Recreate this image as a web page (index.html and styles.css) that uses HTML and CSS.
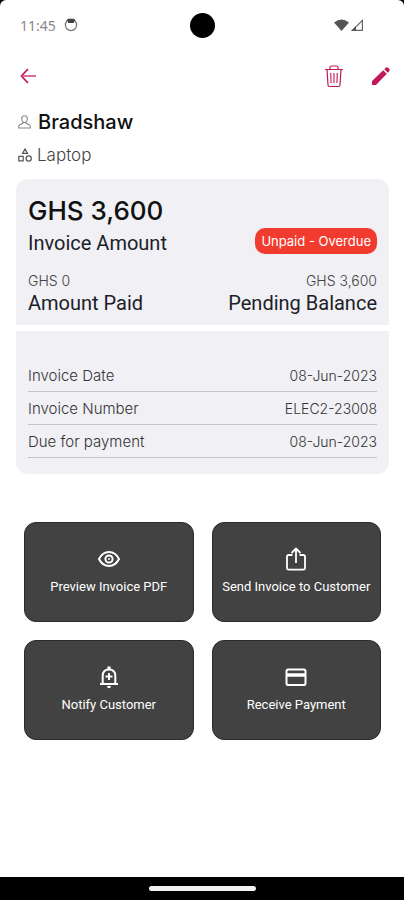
FILE: index.html
```html
<!DOCTYPE html>
<html lang="en">
<head>
<meta charset="utf-8">
<meta name="viewport" content="width=device-width, initial-scale=1">
<title>Invoice</title>
<link rel="stylesheet" href="styles.css">
</head>
<body>
<div class="screen">
  <div class="status">
    <div class="status-left">
      <span>11:45</span>
      <svg width="14" height="14" viewBox="0 0 14 14" aria-hidden="true"><circle cx="7" cy="7" r="5.600" fill="none" stroke="#777" stroke-width="1.300"/><path d="M2.500 2.500 4 .8h6l1.500 1.700-1.500 1v1.500H4V3.500z" fill="#444"/></svg>
    </div>
    <div class="camera"></div>
    <div class="status-right">
      <svg width="15" height="12" viewBox="0 0 15 12" aria-hidden="true"><path d="M0 3.500Q7.500-2.500 15 3.500L7.500 12z" fill="#555"/></svg>
      <svg width="13" height="12" viewBox="0 0 13 12" aria-hidden="true"><path d="M1.500 11.300 11.400 1.400v9.900z" fill="none" stroke="#666" stroke-width="1.200"/><path d="M0 12 5 7v5z" fill="#555"/></svg>
    </div>
  </div>

  <header class="appbar">
    <button class="icon-button" type="button" aria-label="Back">
      <svg width="16" height="16" viewBox="0 0 16 16" fill="none" stroke="#c2185b" stroke-width="1.800"><path d="M8 1 1.500 8 8 15"/><path d="M2 8h14" stroke="#d6608d"/></svg>
    </button>
    <div class="tools">
      <button class="icon-button" type="button" aria-label="Delete">
        <svg width="20" height="24" viewBox="0 0 20 24" fill="none" stroke="#c2185b" stroke-width="1.200"><path d="M1 5.500h18M6 5V3.500Q6 2 7.500 2h5Q14 2 14 3.500V5M3 5.500l1 15.500q.1 1.500 1.500 1.500h9q1.400 0 1.500-1.500L17 5.500"/><path d="M6.700 9l.4 10M10 9v10M13.300 9l-.4 10" stroke-width="1.100"/></svg>
      </button>
      <button class="icon-button" type="button" aria-label="Edit">
        <svg width="18" height="18" viewBox="0 0 18 18" fill="#c2185b"><path d="M0 18v-4L11.200 3.200l3.600 3.600L4 18zM12.300 2.200 13.700.8q1.200-1.200 2.400 0l1.100 1.100q1.200 1.200 0 2.400l-1.300 1.400z"/></svg>
      </button>
    </div>
  </header>

  <main>
    <section class="heading">
      <h1 class="customer">
        <svg width="13" height="14" viewBox="0 0 13 14" fill="none" stroke="#888" stroke-width="1.100" aria-hidden="true"><path d="M6.500.8C4.700.8 3.700 2 3.700 3.800S5 7.500 6.500 7.500s2.800-1.900 2.800-3.700S8.300.8 6.500.8zM4.800 7.300v1L1.500 10q-.9.600-.9 3h11.800q0-2.400-.9-3L8.200 8.300v-1"/></svg>
        <span>Bradshaw</span>
      </h1>
      <p class="item">
        <svg width="14" height="14" viewBox="0 0 14 14" fill="none" stroke="#555" stroke-width="1.200" aria-hidden="true"><path d="M7 1 4.500 5.400h5zM.8 8.300h4.400v4.600H.8z"/><circle cx="10.700" cy="10.500" r="2.600"/></svg>
        <span>Laptop</span>
      </p>
    </section>

    <section class="card summary">
      <p class="total">GHS 3,600</p>
      <div class="line amount-line">
        <p class="label">Invoice Amount</p>
        <span class="badge">Unpaid - Overdue</span>
      </div>
      <div class="line">
        <div>
          <p class="small">GHS 0</p>
          <p class="label">Amount Paid</p>
        </div>
        <div class="end">
          <p class="small">GHS 3,600</p>
          <p class="label">Pending Balance</p>
        </div>
      </div>
    </section>

    <dl class="card details">
      <div class="row"><dt>Invoice Date</dt><dd>08-Jun-2023</dd></div>
      <div class="row"><dt>Invoice Number</dt><dd>ELEC2-23008</dd></div>
      <div class="row"><dt>Due for payment</dt><dd>08-Jun-2023</dd></div>
    </dl>

    <div class="actions">
      <button class="action" type="button">
        <svg width="24" height="24" viewBox="0 0 24 24" fill="none" stroke="#fff" stroke-width="2" aria-hidden="true"><path d="M2 12Q5.500 5 12 5t10 7q-3.500 7-10 7T2 12z"/><circle cx="12" cy="12" r="3.600"/><circle cx="12" cy="12" r="1" fill="#fff" stroke="none"/></svg>
        <span>Preview Invoice PDF</span>
      </button>
      <button class="action" type="button">
        <svg width="24" height="24" viewBox="0 0 24 24" fill="none" stroke="#fff" stroke-width="1.800" aria-hidden="true"><path d="M8.500 8H4.800Q3 8 3 9.800v11Q3 22.600 4.800 22.600h14.400q1.800 0 1.800-1.800v-11Q21 8 19.200 8h-3.700M12 16V2M7.500 6 12 1.500 16.500 6"/></svg>
        <span>Send Invoice to Customer</span>
      </button>
      <button class="action" type="button">
        <svg width="24" height="24" viewBox="0 0 24 24" fill="none" stroke="#fff" stroke-width="2" aria-hidden="true"><path d="M3 19h18M5.700 18.500V11q0-6.500 6.300-6.500t6.300 6.500v7.500M12 8v7M8.500 11.500h7"/><path d="M10.400 1.500h3.200v3h-3.200zM10 21h4q-.2 2.300-2 2.300T10 21z" fill="#fff" stroke="none"/></svg>
        <span>Notify Customer</span>
      </button>
      <button class="action" type="button">
        <svg width="24" height="24" viewBox="0 0 24 24" fill="none" stroke="#fff" stroke-width="2" aria-hidden="true"><rect x="2.500" y="4.500" width="19" height="15.500" rx="1.800"/><path d="M2.500 10h19" stroke-width="3.500"/></svg>
        <span>Receive Payment</span>
      </button>
    </div>
  </main>
</div>
<div class="navbar"><div class="handle"></div></div>
</body>
</html>
```
FILE: styles.css
```css
* {
  box-sizing: border-box;
}

body {
  margin: 0;
  min-height: 100vh;
  display: flex;
  flex-direction: column;
  background: #000;
  color: #111;
  font-family: Inter, "Open Sans", sans-serif;
}

h1, p, dl, dd {
  margin: 0;
}

svg {
  display: block;
  flex: none;
}

button {
  font: inherit;
  border: 0;
  padding: 0;
  background: none;
  cursor: pointer;
}

.screen {
  flex: 1;
  background: #fff;
  border-radius: 6px 6px 0 0;
}

.status {
  display: grid;
  grid-template-columns: 1fr auto 1fr;
  align-items: center;
  height: 50px;
  padding: 0 40px 0 20px;
  font: 14px "Noto Sans", sans-serif;
  color: #888;
}

.status-left, .status-right {
  display: flex;
  align-items: center;
}

.status-left {
  gap: 8px;
}

.status-right {
  justify-content: flex-end;
  gap: 2px;
}

.camera {
  width: 25px;
  height: 25px;
  margin-left: 20px;
  border-radius: 50%;
  background: #000;
}

.appbar {
  display: flex;
  align-items: center;
  justify-content: space-between;
  height: 52px;
  padding: 0 14px 0 20px;
}

.tools {
  display: flex;
  align-items: center;
  gap: 28px;
}

.heading {
  padding: 6px 18px 0;
}

.customer, .item {
  display: flex;
  align-items: center;
}

.customer {
  gap: 7px;
  height: 28px;
  font-size: 20px;
  font-weight: 500;
}

.item {
  gap: 5px;
  height: 24px;
  margin-top: 7px;
  font-size: 17px;
  font-weight: 300;
  color: #444;
}

.card {
  margin: 0 15px 0 16px;
  padding: 0 12px;
  background: #f0f0f5;
}

.summary {
  margin-top: 12px;
  padding-top: 15px;
  padding-bottom: 11px;
  border-radius: 12px 12px 0 0;
}

.total {
  font-size: 26px;
  font-weight: 500;
  line-height: 34px;
}

.line {
  display: flex;
  align-items: center;
  justify-content: space-between;
}

.amount-line {
  align-items: flex-end;
  height: 26px;
  margin-bottom: 16px;
}

.label {
  font: 20px/22px Roboto, sans-serif;
  color: #1c2027;
}

.badge {
  padding: 0 6px;
  border-radius: 10px;
  background: #f23b2f;
  color: #fff;
  font-size: 13px;
  line-height: 26px;
}

.small {
  font-size: 14px;
  font-weight: 300;
  line-height: 22px;
  color: #444;
}

.end {
  text-align: right;
}

.details {
  margin-top: 6px;
  padding-top: 28px;
  padding-bottom: 16px;
  border-radius: 0 0 12px 12px;
  font-size: 14px;
  font-weight: 300;
  color: #333;
}

.row {
  display: flex;
  align-items: center;
  justify-content: space-between;
  height: 33px;
  border-bottom: 1px solid #c4c4c8;
}

.row dt {
  font-size: 15px;
}

.actions {
  display: grid;
  grid-template-columns: 1fr 1fr;
  gap: 18px;
  padding: 48px 23px 48px 24px;
}

.action {
  display: flex;
  flex-direction: column;
  align-items: center;
  justify-content: center;
  gap: 6px;
  height: 100px;
  border: 1px solid #2b2b2b;
  border-radius: 12px;
  background: #424242;
  color: #fff;
  font: 13px/20px Roboto, sans-serif;
}

.navbar {
  display: flex;
  justify-content: center;
  height: 23px;
  padding-top: 9px;
  background: #000;
}

.handle {
  width: 107px;
  height: 5px;
  border-radius: 3px;
  background: #f2f2f2;
}
```
